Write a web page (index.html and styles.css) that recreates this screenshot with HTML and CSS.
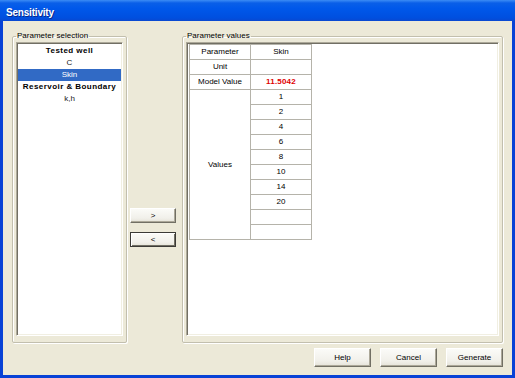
FILE: index.html
```html
<!DOCTYPE html>
<html lang="en">
<head>
    <meta charset="UTF-8">
    <title>Sensitivity</title>
    <link rel="stylesheet" href="styles.css">
</head>
<body>
    <div class="window">
        <div class="titlebar">Sensitivity</div>
        <div class="client">
            <div class="main">
                <fieldset class="group group-left">
                    <legend>Parameter selection</legend>
                    <div class="listbox">
                        <div class="item bold">Tested well</div>
                        <div class="item">C</div>
                        <div class="item selected">Skin</div>
                        <div class="item bold">Reservoir &amp; Boundary</div>
                        <div class="item">k,h</div>
                    </div>
                </fieldset>

                <div class="move-buttons">
                    <button class="btn btn-small">&gt;</button>
                    <button class="btn btn-small focused">&lt;</button>
                </div>

                <fieldset class="group group-right">
                    <legend>Parameter values</legend>
                    <div class="listbox listbox-grid">
                        <table class="values">
                            <tr><td class="col-name">Parameter</td><td>Skin</td></tr>
                            <tr><td>Unit</td><td></td></tr>
                            <tr><td>Model Value</td><td class="model">11.5042</td></tr>
                            <tr><td rowspan="10">Values</td><td>1</td></tr>
                            <tr><td>2</td></tr>
                            <tr><td>4</td></tr>
                            <tr><td>6</td></tr>
                            <tr><td>8</td></tr>
                            <tr><td>10</td></tr>
                            <tr><td>14</td></tr>
                            <tr><td>20</td></tr>
                            <tr><td></td></tr>
                            <tr><td></td></tr>
                        </table>
                    </div>
                </fieldset>
            </div>

            <div class="footer">
                <button class="btn">Help</button>
                <button class="btn">Cancel</button>
                <button class="btn">Generate</button>
            </div>
        </div>
    </div>
</body>
</html>
```

FILE: styles.css
```css
body { margin: 0; font-family: "Liberation Sans", Arial, sans-serif; font-size: 8px; color: #000; }
.window { width: 515px; height: 378px; display: flex; flex-direction: column; background: #0842d6; box-sizing: border-box; }
.titlebar { height: 21px; flex: none; padding-left: 6px; line-height: 25px; color: #fff; font-weight: bold; font-size: 10px; letter-spacing: -0.2px; background: linear-gradient(#3c8cf5 0, #0a5fe8 3px, #0058ea 40%, #004fdf 85%, #0a48d0 100%); text-shadow: 1px 1px #0a2a8c; }
.client { flex: 1; margin: 0 3px 3px; background: #ece9d8; display: flex; flex-direction: column; padding: 9px 9px 8px; }
.main { flex: 1; display: flex; min-height: 0; }
.group { margin: 0; padding: 0 3px 6px; border: 1px solid #c2bfae; border-radius: 2px; box-shadow: inset 1px 1px #fff, 1px 1px #fff; display: flex; flex-direction: column; min-width: 0; }
.group legend { padding: 0 1px; margin-left: 0; line-height: 12px; font-size: 8px; }
.group-left { width: 115px; box-sizing: border-box; }
.group-right { width: 321px; box-sizing: border-box; margin-left: 6px; }
.listbox { flex: 1; background: #fff; border: 1px solid; border-color: #aca899 #fff #fff #aca899; box-shadow: inset 1px 1px #716f64, inset -1px -1px #f1efe2; padding: 2px 1px 1px 1px; }
.listbox-grid { padding-left: 2px; }
.item { height: 12px; line-height: 12px; text-align: center; color: #222; }
.item.bold { font-weight: bold; letter-spacing: 0.45px; color: #000; }
.item.selected { background: #316ac5; color: #fff; }
.move-buttons { width: 46px; margin-left: 3px; display: flex; flex-direction: column; gap: 9px; padding-top: 178px; }
.btn { font-family: "Liberation Sans", Arial, sans-serif; font-size: 8px; color: #000; background: linear-gradient(#fbfbf8, #f1f0ea 70%, #e5e3d8); border: 1px solid; border-color: #fff #716f64 #716f64 #fff; box-shadow: inset -1px -1px #aca899; padding: 0; width: 57px; height: 19px; }
.btn-small { width: 46px; height: 15px; }
.btn.focused { border: 1px solid #3b3a36; box-shadow: inset 1px 1px #fff, inset -1px -1px #716f64; }
.footer { flex: none; display: flex; justify-content: flex-end; gap: 9px; margin-top: 5px; }
.values { border-collapse: collapse; margin-top: -1px; }
.values td { border: 1px solid #b5b3aa; width: 60px; height: 14px; padding: 0; text-align: center; line-height: 14px; }
.values td + td, .values td[rowspan] + td { width: 60px; }
.values .model { color: #e00000; font-weight: bold; letter-spacing: 0.2px; }
```
